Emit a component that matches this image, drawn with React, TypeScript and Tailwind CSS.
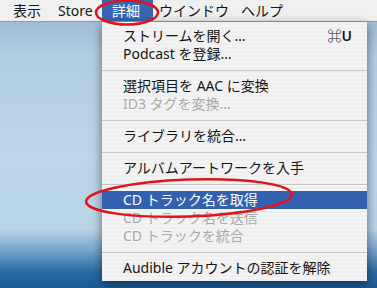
import React from 'react';

type Item =
  | { kind: 'item'; label: string; shortcut?: string; disabled?: boolean; active?: boolean }
  | { kind: 'sep' };

const menuItems: Item[] = [
  { kind: 'item', label: 'ストリームを開く…', shortcut: '⌘U' },
  { kind: 'item', label: 'Podcast を登録…' },
  { kind: 'sep' },
  { kind: 'item', label: '選択項目を AAC に変換' },
  { kind: 'item', label: 'ID3 タグを変換…', disabled: true },
  { kind: 'sep' },
  { kind: 'item', label: 'ライブラリを統合…' },
  { kind: 'sep' },
  { kind: 'item', label: 'アルバムアートワークを入手' },
  { kind: 'sep' },
  { kind: 'item', label: 'CD トラック名を取得', active: true },
  { kind: 'item', label: 'CD トラック名を送信', disabled: true },
  { kind: 'item', label: 'CD トラックを統合', disabled: true },
  { kind: 'sep' },
  { kind: 'item', label: 'Audible アカウントの認証を解除' },
];

const MenuRow = ({ item }: { item: Item }) => {
  if (item.kind === 'sep') {
    return (
      <div className="h-[14px] flex items-center">
        <div className="h-px w-full bg-[#c6c6c6]" />
      </div>
    );
  }
  return (
    <div
      className={`h-[18px] flex items-center justify-between pl-[21px] pr-[15px] leading-[18px] ${
        item.active ? 'bg-[#3361b0] text-white' : item.disabled ? 'text-[#a9a9a9]' : 'text-[#151515]'
      }`}
    >
      <span>{item.label}</span>
      {item.shortcut && <span className="font-semibold">{item.shortcut}</span>}
    </div>
  );
};

export default function App() {
  return (
    <div className="relative w-[377px] h-[288px] overflow-hidden flex flex-col text-[14px] font-['Noto_Sans','Noto_Sans_CJK_JP','DejaVu_Sans',sans-serif]">
      {/* menu bar */}
      <div className="h-[22px] shrink-0 flex items-stretch pl-[3px] border-b border-[#9c9c9c] bg-[repeating-linear-gradient(0deg,#ececec_0px,#ececec_1px,#f4f4f4_1px,#f4f4f4_2px)] text-[#161616] leading-[20px]">
        <div className="flex items-center w-[48px] pl-[10px]">表示</div>
        <div className="flex items-center w-[51px] pl-[7px]">Store</div>
        <div className="flex items-center w-[51px] pl-[10px] bg-[#3866b3] text-white">詳細</div>
        <div className="flex items-center w-[88px] pl-[6px]">ウインドウ</div>
        <div className="flex items-center pl-[0px]">ヘルプ</div>
      </div>

      {/* desktop */}
      <div className="flex-1 bg-[linear-gradient(180deg,#9fbcd4_0%,#b3cde1_12%,#bcd5e7_50%,#bad4e7_78%,#6a9cc6_87%,#2a6aa4_94%,#175a97_100%)]" />

      {/* open menu */}
      <div className="absolute left-[102px] top-[22px] w-[265px] pt-[5px] pb-[4px] bg-[repeating-linear-gradient(0deg,#efefef_0px,#efefef_2px,#f4f4f4_2px,#f4f4f4_4px)] shadow-[0_3px_10px_rgba(0,0,0,0.5)]">
        {menuItems.map((item, i) => (
          <MenuRow key={i} item={item} />
        ))}
      </div>

      {/* red marks */}
      <svg className="absolute inset-0 pointer-events-none" width="377" height="288" viewBox="0 0 377 288">
        <ellipse cx="127" cy="12.5" rx="31" ry="12" fill="none" stroke="#e4121b" strokeWidth="2.5" />
        <ellipse
          cx="189"
          cy="198"
          rx="103"
          ry="18.5"
          fill="none"
          stroke="#e4121b"
          strokeWidth="2.5"
          transform="rotate(-2 189 198)"
        />
      </svg>
    </div>
  );
}
